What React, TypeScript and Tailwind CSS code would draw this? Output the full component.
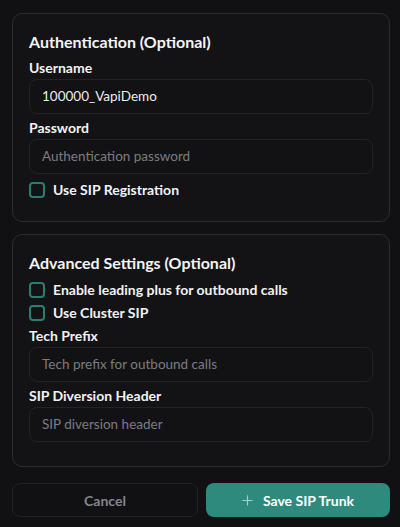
import React from "react";

function Check({ label }: { label: string }) {
  return (
    <div className="flex h-5 items-center gap-2">
      <span className="box-border h-4 w-4 shrink-0 rounded-[4px] border-2 border-[#2a7d70] bg-transparent" />
      <span className="text-[14px] font-bold leading-5 text-[#f2f2f3]">{label}</span>
    </div>
  );
}

function Field({
  label,
  value,
  placeholder,
}: {
  label: string;
  value?: string;
  placeholder?: string;
}) {
  return (
    <div className="flex flex-col">
      <div className="text-[14px] font-bold leading-5 text-[#f2f2f3]">{label}</div>
      <div className="mt-px flex h-[35px] items-center rounded-lg border border-[#232327] bg-[#121214] px-3 text-[13.5px]">
        {value ? (
          <span className="text-[#ececee]">{value}</span>
        ) : (
          <span className="text-[#7c7c82]">{placeholder}</span>
        )}
      </div>
    </div>
  );
}

export default function App() {
  return (
    <div
      className="flex min-h-[527px] w-[400px] flex-col bg-[#111113] pl-3 pr-[10px] pt-[13px]"
      style={{ fontFamily: 'Lato, "Noto Sans", sans-serif' }}
    >
      <div className="flex flex-col rounded-[10px] border border-[#2a2d33] bg-[#131316] px-4 pb-[21px] pt-4">
        <div className="text-[16px] font-bold leading-6 text-[#f4f4f5]">Authentication (Optional)</div>
        <div className="mt-1">
          <Field label="Username" value="100000_VapiDemo" />
        </div>
        <div className="mt-1">
          <Field label="Password" placeholder="Authentication password" />
        </div>
        <div className="mt-[6px]">
          <Check label="Use SIP Registration" />
        </div>
      </div>

      <div className="mt-3 flex flex-col rounded-[10px] border border-[#2a2d33] bg-[#131316] px-4 pb-6 pt-4">
        <div className="text-[16px] font-bold leading-6 text-[#f4f4f5]">Advanced Settings (Optional)</div>
        <div className="mt-[5px]">
          <Check label="Enable leading plus for outbound calls" />
        </div>
        <div className="mt-[3px]">
          <Check label="Use Cluster SIP" />
        </div>
        <div className="mt-[3px]">
          <Field label="Tech Prefix" placeholder="Tech prefix for outbound calls" />
        </div>
        <div className="mt-1">
          <Field label="SIP Diversion Header" placeholder="SIP diversion header" />
        </div>
      </div>

      <div className="mt-4 flex gap-2">
        <button className="flex h-[34px] flex-1 items-center justify-center rounded-lg border border-[#222226] bg-[#111113] text-[14px] font-bold text-[#85858b]">
          Cancel
        </button>
        <button className="flex h-[34px] flex-1 items-center justify-center gap-[10px] rounded-lg bg-[#2e8a7d] text-[14px] font-bold text-white">
          <svg width="11" height="11" viewBox="0 0 12 12" fill="none" stroke="#a6cec8" strokeWidth="1.3" strokeLinecap="round">
            <path d="M6 1v10M1 6h10" />
          </svg>
          <span>Save SIP Trunk</span>
        </button>
      </div>
    </div>
  );
}
